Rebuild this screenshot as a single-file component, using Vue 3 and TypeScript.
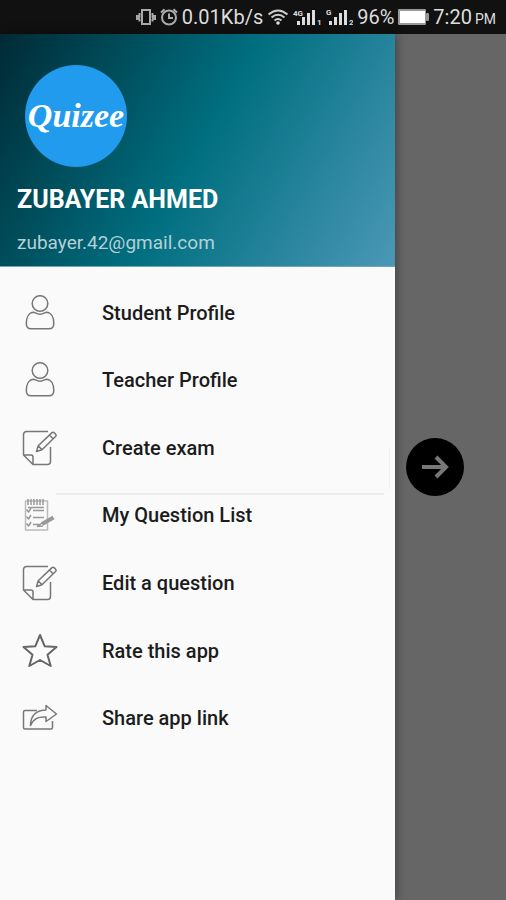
<script setup lang="ts">
type IconName = 'person' | 'compose' | 'checklist' | 'star' | 'share'

interface MenuItem {
  label: string
  icon: IconName
  divided?: boolean
}

const items: MenuItem[] = [
  { label: 'Student Profile', icon: 'person' },
  { label: 'Teacher Profile', icon: 'person' },
  { label: 'Create exam', icon: 'compose' },
  { label: 'My Question List', icon: 'checklist', divided: true },
  { label: 'Edit a question', icon: 'compose' },
  { label: 'Rate this app', icon: 'star' },
  { label: 'Share app link', icon: 'share' },
]
</script>

<template>
  <div class="screen">
    <header class="status">
      <svg class="vibrate" width="20" height="18" viewBox="0 0 20 18" aria-hidden="true">
        <path d="M6 2h8v14H6z M3.5 5v2l-1 1 1 1-1 1.500 1 1v2 M16.500 5v2l1 1-1 1 1 1.500-1 1v2 M.8 7v5 M19.200 7v5" />
      </svg>
      <svg class="alarm" width="18" height="18" viewBox="0 0 18 18" aria-hidden="true">
        <circle cx="9" cy="9.500" r="7" />
        <path d="M9 5.500V10h4 M1 4.500 4.500 1.300 M17 4.500 13.500 1.300" />
      </svg>
      <span class="speed">0.01Kb/s</span>
      <svg class="wifi" width="22" height="18" viewBox="0 0 22 18" aria-hidden="true">
        <path d="M1.500 6.500Q11-1.500 20.500 6.500 M4.500 9.500Q11 4 17.500 9.500 M7.500 12.500Q11 9.500 14.500 12.500" />
        <circle cx="11" cy="15" r="1.800" />
      </svg>
      <svg class="signal" width="28" height="20" viewBox="0 0 28 20" aria-hidden="true">
        <path d="M4 14h3v4H4z M9 10h3v8H9z M14 6h3v12h-3z M19 3h3v15h-3z" />
        <text x="0" y="9">4G</text>
        <text x="24" y="18">1</text>
      </svg>
      <svg class="signal" width="28" height="20" viewBox="0 0 28 20" aria-hidden="true">
        <path d="M4 14h3v4H4z M9 10h3v8H9z M14 6h3v12h-3z M19 3h3v15h-3z" />
        <text x="1" y="8">G</text>
        <text x="24" y="18">2</text>
      </svg>
      <span class="percent">96%</span>
      <svg class="battery" width="31" height="16" viewBox="0 0 31 16" aria-hidden="true">
        <rect class="shell" x="0" y="0" width="28" height="16" rx="1" />
        <rect class="shell" x="28" y="4" width="3" height="8" rx="1" />
        <rect class="charge" x="2" y="2" width="25" height="12" />
      </svg>
      <time class="clock"><span>7:20</span> <small>PM</small></time>
    </header>

    <div class="body">
      <aside class="drawer">
        <div class="account">
          <div class="logo"><span>Quizee</span></div>
          <h1>ZUBAYER AHMED</h1>
          <p>zubayer.42@gmail.com</p>
        </div>
        <nav aria-label="Main">
          <ul class="menu">
            <li v-for="item in items" :key="item.label" :class="{ divided: item.divided }">
              <a href="#">
                <svg class="icon" :class="item.icon" width="36" height="36" viewBox="0 0 36 36" aria-hidden="true">
                  <template v-if="item.icon === 'person'">
                    <circle cx="18" cy="8.500" r="7.800" />
                    <path d="M11.500 17.200C7 17.500 4.300 22 4.300 28.500c0 3.500 1.700 5.300 4.700 5.300h18c3 0 4.800-1.800 4.800-5.300 0-6.500-2.800-11-7.300-11.300-1.500 0-3 2-6.500 2s-5-2-6.500-2z" />
                  </template>
                  <template v-else-if="item.icon === 'compose'">
                    <path d="M26 1.500H4.500a3 3 0 0 0-3 3V25L11 34.500h14.500a3 3 0 0 0 3-3V17 M1.500 25h7.500c1.500 0 2 .7 2 2v7.500" />
                    <path d="M14.500 21.500 16.200 15.800 30 2.600c1.500-1.200 5 2 3.800 3.700L20 19.800z M16.200 15.800 20 19.800 M27.500 5l3.800 3.900" />
                  </template>
                  <template v-else-if="item.icon === 'checklist'">
                    <path class="sheet" d="M3.500 4h22v29h-22z" />
                    <path class="rings" d="M6 2v6 M9 2v6 M12 2v6 M15 2v6 M18 2v6 M21 2v6" />
                    <path d="M4.500 12.500l2 2.500L9 11 M11 13.500h11 M4.500 19.500l2 2.500L9 18 M11 20.500h11 M4.500 26.500l2 2.500L9 25 M11 27.500h8 M6 10.500h16" />
                    <path class="pencil" d="M20 27 31.500 20.500" />
                    <path d="M15 29.500l5-3.500M15 29.500l6-.5" />
                  </template>
                  <template v-else-if="item.icon === 'star'">
                    <path d="M18 2 22.600 13.200 34.500 14 25.500 21.800 28.700 33 18 27 7.300 33 10.500 21.800 1.500 14 13.400 13.200z" />
                  </template>
                  <template v-else>
                    <path d="M15 10.500H3a1.500 1.500 0 0 0-1.500 1.500v15.500A1.500 1.500 0 0 0 3 29h26a1.500 1.500 0 0 0 1.500-1.500V21" />
                    <path d="M24 5.500 34.500 14 24 21.500V17c-8-.5-12 1.500-15.500 8.500C8.500 15 15 10 24 10z" />
                  </template>
                </svg>
                <span>{{ item.label }}</span>
              </a>
            </li>
          </ul>
        </nav>
      </aside>
      <main class="scrim">
        <button type="button" class="next" aria-label="Next">
          <svg width="28" height="24" viewBox="0 0 28 24" aria-hidden="true">
            <path d="M1 12h24 M15 2l10 10-10 10" />
          </svg>
        </button>
      </main>
    </div>
  </div>
</template>

<style>
body {
  background: #666;
}
</style>

<style scoped>
.screen {
  display: flex;
  flex-direction: column;
  min-height: 100vh;
  font-family: Roboto, "Liberation Sans", sans-serif;
}

.status {
  display: flex;
  align-items: center;
  justify-content: flex-end;
  gap: 4px;
  height: 34px;
  padding-right: 10px;
  background: #111;
  color: #ddd;
  font-size: 20px;
  line-height: 24px;
  white-space: nowrap;
}

.status svg {
  flex: none;
  fill: none;
  stroke: #ccc;
}

.status .vibrate,
.status .alarm {
  stroke-width: 2;
  stroke: #aaa;
}

.status .wifi {
  stroke-width: 2;
}

.status .wifi circle,
.status .signal {
  fill: #ddd;
  stroke: none;
}

.signal text {
  font-size: 8px;
  font-weight: 700;
}

.status .battery {
  stroke: none;
}

.shell {
  fill: #999;
}

.charge {
  fill: #fff;
}

.clock {
  display: flex;
  align-items: baseline;
  gap: 3px;
}

.clock small {
  font-size: 14px;
  line-height: 16px;
}

.body {
  display: flex;
  flex: 1;
}

.drawer {
  position: relative;
  flex: none;
  width: 78%;
  background: #fafafa;
  box-shadow: 1px 0 10px rgba(0, 0, 0, 0.4);
}

.account {
  padding: 31px 17px 11px;
  border-bottom: 1px solid #6fa6b4;
  background: linear-gradient(120deg, #002a35 0%, #006f80 50%, #4b98b6 100%);
  color: #fff;
}

.logo {
  display: flex;
  align-items: center;
  justify-content: center;
  width: 102px;
  height: 102px;
  margin: 0 8px;
  border-radius: 50%;
  background: #219bed;
  font-family: "Liberation Serif", serif;
  font-size: 34px;
  font-style: italic;
  font-weight: 700;
}

h1 {
  margin: 17px 0 0;
  font-size: 25px;
  line-height: 32px;
  font-weight: 700;
}

p {
  margin: 15px 0 0;
  color: #b4d0d7;
  font-size: 19px;
  line-height: 24px;
}

.menu {
  display: grid;
  grid-auto-rows: 1fr;
  height: 473px;
  margin: 0;
  padding: 12px 0 0;
  list-style: none;
}

.menu li {
  position: relative;
  display: grid;
}

.menu a {
  display: flex;
  align-items: center;
  gap: 44px;
  padding: 0 22px;
  color: #1c1c1c;
  font-size: 20px;
  line-height: 24px;
  font-weight: 500;
  text-decoration: none;
}

.divided::before {
  content: "";
  position: absolute;
  top: 11px;
  right: 11px;
  left: 56px;
  height: 2px;
  background: #ededed;
}

.divided::after {
  content: "";
  position: absolute;
  top: -34px;
  right: 5px;
  width: 1px;
  height: 42px;
  background: #f2f2f2;
}

.icon {
  flex: none;
  fill: none;
  stroke: #777;
  stroke-width: 1.5;
  stroke-linejoin: round;
}

.star {
  stroke: #666;
  stroke-width: 2;
}

.checklist {
  stroke: #999;
}

.checklist .sheet {
  stroke: #bbb;
}

.checklist .pencil {
  stroke-width: 4;
}

.scrim {
  display: flex;
  flex: 1;
  align-items: center;
  justify-content: flex-end;
  padding-right: 42px;
}

.next {
  display: grid;
  place-items: center;
  width: 58px;
  height: 58px;
  padding: 0;
  border: 0;
  border-radius: 50%;
  background: #000;
}

.next svg {
  fill: none;
  stroke: #777;
  stroke-width: 4;
}
</style>
